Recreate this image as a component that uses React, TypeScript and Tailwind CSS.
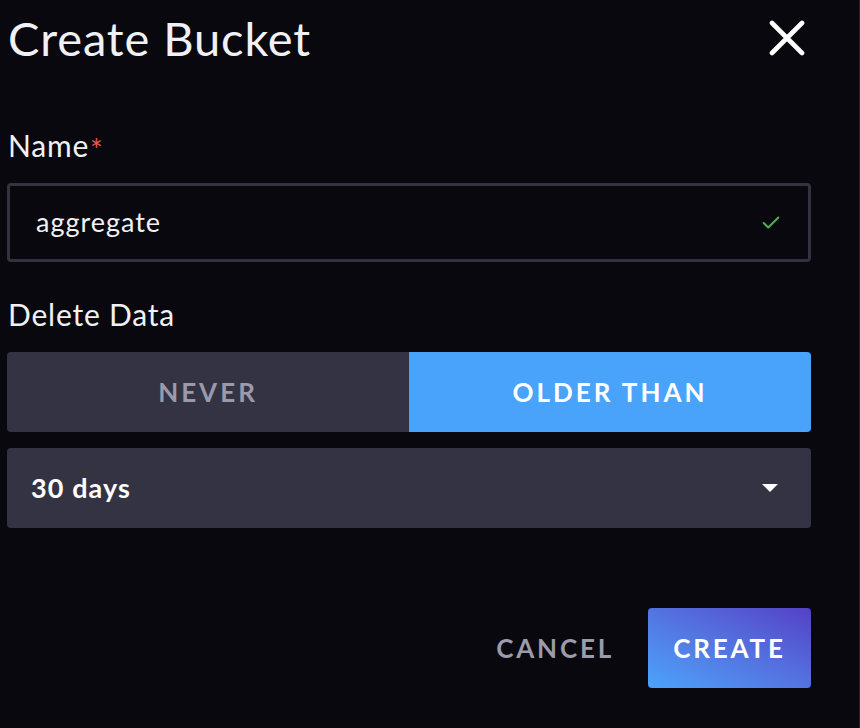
import React from 'react';
import { Check } from 'lucide-react';

const App: React.FC = () => {
  return (
    <div
      className="w-[860px] h-[728px] bg-[#08080e] border-r border-[#231c33] text-white overflow-hidden"
      style={{ fontFamily: 'Lato, "Open Sans", sans-serif' }}
    >
      <div className="px-[7px] w-[818px]">
        {/* Header */}
        <div className="h-[76px] flex items-center justify-between">
          <h1 className="text-[47px] leading-none font-normal tracking-[0.9px] pl-[1px] text-[#f1f1f5]">
            Create Bucket
          </h1>
          <svg width="36" height="36" viewBox="0 0 36 36" className="mr-[6px]">
            <path d="M3 3 L33 33 M33 3 L3 33" stroke="#ffffff" strokeWidth="4.6" strokeLinecap="round" />
          </svg>
        </div>

        {/* Name */}
        <div className="mt-[44px] h-[50px] flex items-center">
          <span className="text-[30px] leading-none pl-[1px] tracking-[0.8px] text-[#f1f1f5]">Name</span>
          <span className="text-[30px] leading-none text-[#e5574b] self-start mt-[14px] ml-[1px]">*</span>
        </div>
        <div className="mt-[13px] w-[804px] h-[79px] border-[3px] border-[#34323f] rounded-[4px] flex items-center justify-between pl-[26px] pr-[26px]">
          <span className="text-[27px] tracking-[1px] text-[#f1f1f5]">aggregate</span>
          <Check className="w-[22px] h-[22px] text-[#4caf50]" strokeWidth={2.2} />
        </div>

        {/* Delete Data */}
        <div className="mt-[31px] h-[42px] flex items-center">
          <span className="text-[30px] leading-none pl-[1px] tracking-[0.8px] text-[#f1f1f5]">Delete Data</span>
        </div>
        <div className="mt-[17px] w-[804px] h-[80px] flex rounded-[4px] overflow-hidden">
          <div className="flex-1 bg-[#343344] flex items-center justify-center">
            <span className="text-[26px] font-bold tracking-[3px] text-[#9b9aab]">NEVER</span>
          </div>
          <div className="flex-1 bg-[#4aa3fb] flex items-center justify-center">
            <span className="text-[26px] font-bold tracking-[3px] text-white">OLDER THAN</span>
          </div>
        </div>

        {/* Duration dropdown */}
        <div className="mt-[16px] w-[804px] h-[80px] bg-[#343344] rounded-[4px] flex items-center justify-between pl-[24px] pr-[33px]">
          <span className="text-[27px] font-bold tracking-[1.1px] text-white">30 days</span>
          <svg width="16" height="8" viewBox="0 0 16 8">
            <path d="M0 0 L16 0 L8 8 Z" fill="#ffffff" />
          </svg>
        </div>

        {/* Footer */}
        <div className="mt-[80px] w-[804px] flex items-center justify-end gap-[34px]">
          <button className="text-[26px] font-bold tracking-[2.8px] text-[#9c9bab]">CANCEL</button>
          <button className="w-[163px] h-[80px] rounded-[4px] bg-linear-to-tr from-[#4aa3fb] to-[#5340c6] text-[26px] font-bold tracking-[2.8px] text-white">
            CREATE
          </button>
        </div>
      </div>
    </div>
  );
};

export default App;
